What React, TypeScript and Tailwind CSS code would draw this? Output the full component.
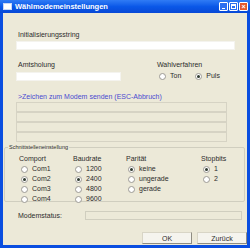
import React from "react";

function Radio({ label, checked, className = "" }: { label: string; checked?: boolean; className?: string }) {
  return (
    <div className={`flex items-center h-[10px] ${className}`}>
      <span className="w-[7px] h-[7px] rounded-full border border-[#9c9a94] bg-white flex items-center justify-center">
        {checked && <span className="w-[3px] h-[3px] rounded-full bg-[#2f3a2f]" />}
      </span>
      <span className="ml-[4px]">{label}</span>
    </div>
  );
}

function Column({ title, items, checked, className = "" }: { title: string; items: string[]; checked: number; className?: string }) {
  return (
    <div className={`flex flex-col ${className}`}>
      <div className="h-[10px] leading-[10px] text-[7px]">{title}</div>
      <div className="flex flex-col text-[7px] pl-[2px]">
        {items.map((it, i) => (
          <Radio key={it} label={it} checked={i === checked} />
        ))}
      </div>
    </div>
  );
}

export default function App() {
  return (
    <div
      className="w-[250px] h-[248px] flex flex-col bg-[#0a4ee0] text-[#2c2c2c] overflow-hidden"
      style={{ fontFamily: '"Liberation Sans", Arial, sans-serif' }}
    >
      {/* title bar */}
      <div className="h-[13px] flex items-center bg-gradient-to-b from-[#2f7bf5] via-[#0a58e8] to-[#0848d6] pl-[3px] pr-[2px]">
        <span className="w-[9px] h-[7px] bg-white border border-[#c9d7f5]" />
        <span className="ml-[3px] text-white font-bold text-[7.5px] leading-none">Wählmodemeinstellungen</span>
        <div className="ml-auto flex gap-[1px]">
          <span className="w-[9px] h-[9px] rounded-[1px] border border-white bg-[#2d6ff0] flex items-end justify-center pb-[1px]">
            <span className="w-[3px] h-[1px] bg-white" />
          </span>
          <span className="w-[9px] h-[9px] rounded-[1px] border border-white bg-[#2d6ff0] flex items-center justify-center">
            <span className="w-[5px] h-[5px] border border-white border-t-2" />
          </span>
          <span className="w-[9px] h-[9px] rounded-[1px] border border-white bg-[#e2582f] flex items-center justify-center text-white text-[7px] font-bold leading-none">
            ×
          </span>
        </div>
      </div>

      {/* client area */}
      <div className="flex-1 mx-[3px] mb-[3px] bg-[#ece9d8] flex flex-col text-[7px] leading-[8px]">
        <div className="mt-[18px] ml-[15px]">Initialisierungsstring</div>
        <div className="mt-[2px] ml-[13px] w-[219px] h-[9px] bg-white border border-[#f4f3ee]" />

        <div className="mt-[11px] flex">
          <div className="flex flex-col ml-[15px]">
            <div>Amtsholung</div>
            <div className="mt-[3px] -ml-[2px] w-[105px] h-[9px] bg-white border border-[#f4f3ee]" />
          </div>
          <div className="flex flex-col ml-[36px]">
            <div>Wahlverfahren</div>
            <div className="mt-[2px] flex">
              <Radio label="Ton" className="ml-[2px]" />
              <Radio label="Puls" checked className="ml-[14px]" />
            </div>
          </div>
        </div>

        <div className="mt-[12px] ml-[15px] text-[#4a4ad0]">&gt;Zeichen zum Modem senden (ESC-Abbruch)</div>
        <div className="mt-[1px] ml-[13px] w-[211px] flex flex-col">
          {[0, 1, 2, 3].map((i) => (
            <div key={i} className="h-[10px] border border-[#d6d3c4] bg-[#ece9d8]" />
          ))}
        </div>

        {/* group box */}
        <div className="relative mt-[5px] ml-[1px] w-[241px] h-[55px] border border-[#d0cebf] rounded-[2px]">
          <span className="absolute -top-[4px] left-[3px] px-[1px] bg-[#ece9d8] text-[5.5px] leading-[7px]">
            Schnittstelleneinstellung
          </span>
          <div className="flex mt-[6px] ml-[14px]">
            <Column title="Comport" items={["Com1", "Com2", "Com3", "Com4"]} checked={1} className="w-[54px]" />
            <Column title="Baudrate" items={["1200", "2400", "4800", "9600"]} checked={1} className="w-[53px]" />
            <Column title="Parität" items={["keine", "ungerade", "gerade"]} checked={0} className="w-[75px]" />
            <Column title="Stopbits" items={["1", "2"]} checked={0} />
          </div>
        </div>

        <div className="mt-[9px] flex items-center">
          <div className="ml-[15px] w-[67px]">Modemstatus:</div>
          <div className="w-[157px] h-[9px] border border-[#d0cebf]" />
        </div>

        <div className="mt-auto mb-[1px] flex justify-end gap-[5px]">
          <button className="w-[50px] h-[12px] bg-[#f5f4ee] border border-[#d8d5c6] border-r-[#8e8c82] border-b-[#8e8c82] text-[7px] leading-none">
            OK
          </button>
          <button className="w-[50px] h-[12px] bg-[#f5f4ee] border border-[#d8d5c6] border-r-[#8e8c82] border-b-[#8e8c82] text-[7px] leading-none">
            Zurück
          </button>
        </div>
      </div>
    </div>
  );
}
